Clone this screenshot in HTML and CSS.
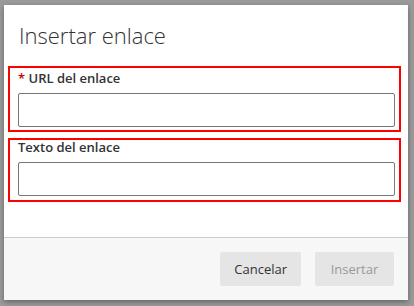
FILE: index.html
```html
<!DOCTYPE html>
<html>
<head>
  <title>Insertar enlace</title>
  <meta charset="UTF-8">
  <meta name="viewport" content="width=device-width, initial-scale=1.0">
  <link rel="stylesheet" href="styles.css">
</head>
<body>
<div class="dialog">
  <div class="dialog-header">
    <h1>Insertar enlace</h1>
  </div>

  <div class="dialog-body">
    <div class="field field-required">
      <label for="linkUrl"><span class="asterisk">*</span> URL del enlace</label>
      <input id="linkUrl" type="text">
    </div>
    <div class="field">
      <label for="linkText">Texto del enlace</label>
      <input id="linkText" type="text">
    </div>
  </div>

  <div class="dialog-footer">
    <button class="btn">Cancelar</button>
    <button class="btn" disabled>Insertar</button>
  </div>
</div>
</body>
</html>
```

FILE: styles.css
```css
body {
  background-color: #9a9a9a;
  font-family: "Open Sans", "DejaVu Sans", sans-serif;
  margin: 0;
  height: 306px;
  overflow: hidden;
}

.dialog {
  display: flex;
  flex-direction: column;
  width: 404px;
  height: 295px;
  margin: 5px 0 0 4px;
  background-color: #fff;
  box-shadow: 0 2px 5px rgba(0, 0, 0, 0.35);
}

.dialog-header {
  padding: 15px 15px 0;
}

h1 {
  margin: 0;
  font-size: 22px;
  font-weight: 300;
  line-height: 30px;
  color: #333;
}

.dialog-body {
  flex: 1;
  padding: 16px 7px 0 4px;
}

.field {
  border: 2px solid #f00;
  padding: 0 4px 4px 8px;
}

.field + .field {
  margin-top: 6px;
}

.field-required {
  padding-top: 3px;
  padding-bottom: 3px;
}

.field label {
  display: block;
  font-size: 13px;
  font-weight: 600;
  line-height: 14px;
  color: #333;
  margin-bottom: 8px;
}

.asterisk {
  color: #c00;
}

.field input {
  display: block;
  box-sizing: border-box;
  width: 100%;
  height: 34px;
  border: 1px solid #777;
  border-radius: 2px;
  background: #fff;
  font-family: inherit;
  font-size: 13px;
}

.dialog-footer {
  display: flex;
  justify-content: flex-end;
  gap: 14px;
  padding: 14px;
  border-top: 1px solid #ccc;
  background-color: #f7f7f7;
}

.btn {
  min-width: 79px;
  height: 34px;
  padding: 0 14px;
  border: 0;
  border-radius: 2px;
  background-color: #e5e5e5;
  color: #333;
  font-family: inherit;
  font-size: 13px;
}

.btn:disabled {
  color: #999;
}
```
